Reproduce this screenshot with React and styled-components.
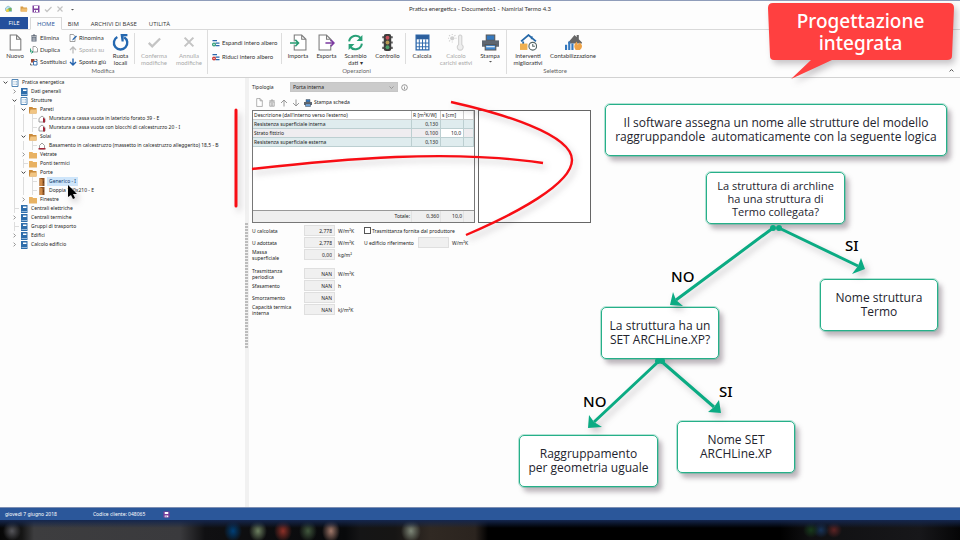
import React from 'react';
import styled, { createGlobalStyle, css } from 'styled-components';

const GlobalStyle = createGlobalStyle`
  * { box-sizing: border-box; }
  body { margin: 0; background: #fdfdfd; color: #222; font: 5px/9px "Noto Sans", sans-serif; }
  button, input, select { font: inherit; color: inherit; margin: 0; padding: 0; border: 0; background: none; }
  svg { display: block; }
`;

const Window = styled.div`
  position: relative;
  display: flex;
  flex-direction: column;
  min-height: 100vh;
  overflow: hidden;
  border-top: 1px solid #8f9dba;
`;

/* ---------- title bar and tabs ---------- */

const TitleBar = styled.header`
  display: grid;
  grid-template-columns: 1fr auto 1fr;
  align-items: center;
  height: 16px;
  padding: 0 5px;
  font: 6px/8px Lato, sans-serif;
`;
const QuickAccess = styled.div`
  display: flex;
  align-items: center;
  gap: 4px;
`;
const Title = styled.h1`
  margin: 0;
  font: inherit;
  color: #333;
`;
const QuickButton = styled.button`
  display: flex;
  width: 8px;
  justify-content: center;
  &:first-child { margin-right: 3px; }
`;
const TabBar = styled.nav`
  display: flex;
  height: 13px;
  border-bottom: 1px solid #d9d9d9;
  font: 6px/12px "Open Sans", sans-serif;
`;
const FileTab = styled.button`
  width: 28px;
  margin-right: 2px;
  background: #24509c;
  color: #fff;
`;
const Tab = styled.button`
  padding: 1px 6px 0;
  color: ${(p) => (p.$active ? '#2b579a' : '#333')};
  ${(p) => p.$active && css`
    height: 13px;
    border: 1px solid #d9d9d9;
    border-bottom-color: #fdfdfd;
    padding: 0 6px;
  `}
`;

/* ---------- ribbon ---------- */

const RibbonBar = styled.div`
  display: flex;
  height: 48px;
  border-bottom: 1px solid #d2d2d2;
  font: 6px/7px Lato, sans-serif;
`;
const RibbonGroup = styled.section`
  display: flex;
  flex-direction: column;
  border-right: ${(p) => (p.$last ? '0' : '1px solid #ddd')};
  padding: 3px ${(p) => (p.$last ? 3 : 1)}px 0 ${(p) => (p.$last ? 3 : 0)}px;
  margin-bottom: 3px;
`;
const GroupItems = styled.div`
  display: flex;
  height: 35px;
`;
const GroupName = styled.div`
  padding-top: 1px;
  text-align: center;
  color: #666;
`;
const Divider = styled.span`
  width: 1px;
  height: 31px;
  margin: 0 1px;
  background: #ddd;
`;
const LargeButton = styled.button`
  display: flex;
  flex-direction: column;
  align-items: center;
  width: ${(p) => p.$width}px;
  white-space: pre-line;
  text-align: center;
  color: ${(p) => (p.disabled ? '#a9a9a9' : '#333')};
`;
const LargeIcon = styled.span`
  display: flex;
  align-items: center;
  height: 18px;
  margin-bottom: 1px;
`;
const SmallStack = styled.div`
  display: flex;
  flex-direction: column;
  justify-content: ${(p) => (p.$spread ? 'space-evenly' : 'flex-start')};
  gap: ${(p) => (p.$spread ? 0 : 3)}px;
  width: ${(p) => p.$width}px;
  padding-left: ${(p) => (p.$spread ? 4 : 0)}px;
`;
const SmallButton = styled.button`
  display: flex;
  align-items: center;
  gap: 2px;
  height: 9px;
  white-space: nowrap;
  color: ${(p) => (p.disabled ? '#a9a9a9' : '#333')};
`;
const CollapseButton = styled.button`
  margin-left: auto;
  align-self: flex-end;
  padding: 0 6px 4px 0;
`;

/* ---------- body ---------- */

const Body = styled.main`
  display: flex;
  flex: 1;
`;
const TreePanel = styled.nav`
  flex: 0 0 245px;
  padding-left: 1px;
`;
const Splitter = styled.div`
  display: flex;
  align-items: center;
  width: 4px;
  margin-right: 3px;
  background: #f1f1f1;
  &::before {
    content: '';
    width: 3px;
    height: 126px;
    margin-bottom: 14px;
    background: radial-gradient(circle at 1px 1px, #aaa 0.6px, transparent 1px) 0 0 / 2px 3px;
  }
`;
const TreeRow = styled.div`
  display: flex;
  align-items: center;
  height: 9px;
`;
const Guide = styled.span`
  align-self: stretch;
  width: 9px;
  background: ${(p) => (p.$line ? 'linear-gradient(#ddd, #ddd) 4px 0 / 1px 100% no-repeat' : 'none')};
`;
const Toggle = styled.button`
  display: flex;
  align-items: center;
  justify-content: center;
  align-self: stretch;
  width: 9px;
`;
const LeafGuide = styled.span`
  align-self: stretch;
  width: 9px;
  background:
    linear-gradient(#ddd, #ddd) 4px 0 / 1px 100% no-repeat,
    linear-gradient(#ddd, #ddd) 4px 4px / 5px 1px no-repeat;
`;
const TreeItem = styled.button`
  display: flex;
  align-items: center;
  gap: 1px;
  height: 9px;
  padding-left: 1px;
  white-space: nowrap;
`;
const TreeText = styled.span`
  padding: 0 2px;
  background: ${(p) => (p.$selected ? '#cfe6fb' : 'transparent')};
  color: ${(p) => (p.$selected ? '#12386b' : '#222')};
`;

const Content = styled.section`
  flex: 1;
  padding-top: 4px;
`;
const TypeRow = styled.div`
  display: flex;
  align-items: center;
  height: 10px;
`;
const TypeLabel = styled.label`
  width: 38px;
`;
const TypeSelect = styled.select`
  appearance: none;
  width: 108px;
  height: 10px;
  padding-left: 2px;
  margin-right: 3px;
  border: 1px solid #c6c6c6;
  background: #cbcbcb url("data:image/svg+xml,%3Csvg xmlns='http://www.w3.org/2000/svg' width='5' height='3'%3E%3Cpath d='M.5.5l2 2 2-2' fill='none' stroke='%23999'/%3E%3C/svg%3E") right 3px center no-repeat;
`;
const LayerTools = styled.div`
  display: flex;
  align-items: center;
  gap: 4px;
  height: 13px;
  margin-top: 4px;
  padding-left: 3px;
`;
const ToolButton = styled.button`
  display: flex;
  align-items: center;
  gap: 2px;
  min-width: 8px;
  white-space: nowrap;
`;
const Layers = styled.div`
  display: flex;
  gap: 3px;
  height: 113px;
  margin-top: 1px;
`;
const LayerFrame = styled.div`
  display: flex;
  flex-direction: column;
  width: 223px;
  border: 1px solid #777;
  background: #fff;
`;
const LayerTable = styled.table`
  width: 100%;
  table-layout: fixed;
  border-spacing: 0;
  line-height: 8px;
  flex: none;
`;
const Cell = styled.td`
  height: 9px;
  padding: 0 ${(p) => (p.$num ? 2 : 1)}px;
  border: 1px solid #bccfd1;
  border-top: 0;
  border-left: 0;
  text-align: ${(p) => (p.$num ? 'right' : 'left')};
  background: ${(p) => p.$bg || 'transparent'};
`;
const HeadCell = styled.th`
  height: 9px;
  padding: 0 1px;
  border-right: 1px solid #ccc;
  border-bottom: 1px solid #ccc;
  font-weight: 400;
  text-align: left;
  white-space: nowrap;
`;
const TotalRow = styled.div`
  display: grid;
  grid-template-columns: 1fr 29px 23px 10px;
  margin-top: auto;
  border-top: 1px solid #999;
  background: #efefef;
  text-align: right;
  line-height: 11px;
  > span { padding-right: 1px; border-right: 1px solid #e2e2e2; }
`;
const Preview = styled.div`
  width: 113px;
  border: 1px solid #666;
  background: #fff;
`;
const Results = styled.div`
  display: flex;
  align-items: flex-start;
  gap: 6px;
  margin-top: 2px;
  line-height: 6px;
`;
const FieldList = styled.div`
  display: flex;
  flex-direction: column;
  gap: 1px;
`;
const Field = styled.div`
  display: flex;
  align-items: center;
  height: 11px;
  margin-top: ${(p) => (p.$gap ? 7 : 0)}px;
`;
const FieldLabel = styled.label`
  width: ${(p) => p.$width}px;
  white-space: pre-line;
`;
const FieldInput = styled.input`
  width: 31px;
  height: 11px;
  margin-right: 3px;
  padding-right: 2px;
  border: 1px solid #dfdfdf;
  background: #f0f0f0;
  text-align: right;
`;
const Unit = styled.span`
  width: 20px;
`;
const Check = styled.input`
  appearance: none;
  width: 7px;
  height: 7px;
  margin-right: 1px;
  border: 1px solid #555;
  background: #fff;
`;

/* ---------- bottom bars ---------- */

const StatusBar = styled.footer`
  display: flex;
  align-items: center;
  gap: 36px;
  height: 13px;
  padding-left: 5px;
  border-top: 1px solid #7d8fb3;
  background: #2b579a;
  color: #fff;
`;
const ClientCode = styled.span`
  display: flex;
  align-items: center;
  gap: 18px;
`;
const Taskbar = styled.div`
  height: 20px;
  background:
    linear-gradient(#14264d 0, #14264d00 8px),
    radial-gradient(ellipse 9px 10px at 12px 11px, #55555a, #55555a00),
    radial-gradient(ellipse 9px 11px at 233px 11px, #003f77, #003f7700),
    radial-gradient(ellipse 9px 11px at 258px 11px, #6d8060, #6d806000),
    radial-gradient(ellipse 9px 11px at 283px 11px, #8c3028, #8c302800),
    radial-gradient(ellipse 9px 11px at 308px 11px, #41573d, #41573d00),
    radial-gradient(ellipse 9px 12px at 331px 11px, #a0786a, #a0786a00),
    radial-gradient(ellipse 10px 12px at 411px 11px, #7e8778, #7e877800),
    radial-gradient(ellipse 8px 8px at 811px 10px, #173a1b, #173a1b00),
    radial-gradient(ellipse 8px 8px at 821px 10px, #173359, #17335900),
    radial-gradient(ellipse 8px 8px at 834px 10px, #5b2324, #5b232400),
    linear-gradient(90deg, #060606 0, #151515 22px, #3d3d3f 34px, #3a3a3d 180px, #101012 205px,
      #08090b 345px, #151516 360px, #161514 395px, #302923 430px, #2b241f 475px, #000 488px, #000 780px, #101012 810px, #17171a 920px, #050506 960px);
`;

/* ---------- annotation layer ---------- */

const Annotations = styled.div`
  position: absolute;
  inset: -1px 0 0 0;
  pointer-events: none;
`;
const Drawing = styled.svg`
  position: absolute;
  left: 0;
  top: 0;
  filter: drop-shadow(3px 4px 3px rgba(60, 50, 60, 0.28));
`;
const Note = styled.div`
  position: absolute;
  left: ${(p) => p.$x}px;
  top: ${(p) => p.$y}px;
  display: flex;
  align-items: center;
  justify-content: center;
  width: ${(p) => p.$w}px;
  height: 52px;
  border: 1px solid #26b089;
  outline: 1px solid #26b08955;
  border-radius: 5px;
  background: #fff;
  box-shadow: 4px 5px 5px rgba(70, 50, 65, 0.35);
  color: #23242e;
  font: 500 ${(p) => (p.$tight ? '11px/13px' : '12px/14px')} "Open Sans", sans-serif;
  text-align: center;
  white-space: pre;
`;
const Answer = styled.span`
  position: absolute;
  left: ${(p) => p.$x}px;
  top: ${(p) => p.$y}px;
  color: #000;
  font: 500 15px/16px "Noto Sans", sans-serif;
`;
const CalloutText = styled.div`
  position: absolute;
  left: 768px;
  top: 4px;
  width: 185px;
  padding-top: 6px;
  color: #fff;
  font: 500 19px/22px "Noto Sans", sans-serif;
  text-align: center;
  white-space: pre-line;
`;

/* ---------- icons ---------- */

const G = '#7b7b7b';
const paths = {
  app: <><path d="M1 11V6l5-4 7 4v7H3z" fill="#bfe0ee" stroke="#5aa0b5" /><path d="M3 12q5-10 10-5v5z" fill="#77b255" /><circle cx="5" cy="11" r="3" fill="#f3cf3e" /></>,
  folder: <><path d="M1 3h5l1 2h7v8H1z" fill="#d79b45" /><path d="M3 7h12l-1 6H2z" fill="#f0bd6f" /></>,
  save: <><path d="M1 1h14v14H1z" fill="#7d3e9c" /><path d="M4 2h8v5H4zM4 10h8v4H4z" fill="#fff" /><path d="M6 11h2v3H6z" fill="#7d3e9c" /></>,
  page: <path d="M3 1h6l4 4v10H3zM9 1v4h4" fill="#fff" stroke={G} />,
  pageIn: <><path d="M4 1h7l4 4v10H4zM11 1v4h4" fill="#fff" stroke={G} /><path d="M3 7h6v3H3z" fill="#fff" /><path d="M0 8.500h8M5 5.500l3 3-3 3" fill="none" stroke="#279b72" strokeWidth="1.500" /></>,
  pageOut: <><path d="M1 1h7l4 4v10H1zM8 1v4h4" fill="#fff" stroke={G} /><path d="M10 7h4v3h-4z" fill="#fff" /><path d="M7 8.500h8M12 5.500l3 3-3 3" fill="none" stroke="#7b3aa0" strokeWidth="1.500" /></>,
  trash: <><path d="M2 4h12M6 4V2h4v2" fill="none" stroke="#4a5565" strokeWidth="1.800" /><path d="M3 6h10v9H3z" fill="#5a6677" /><path d="M6 7v7M8 7v7M10 7v7" stroke="#fff" /></>,
  bin: <><path d="M2 4h12M6 4V2h4v2" fill="none" stroke="#999" strokeWidth="1.500" /><path d="M3.500 6h9v8.500h-9zM6.500 7v7M9.500 7v7" fill="none" stroke="#999" strokeWidth="1.500" /></>,
  copy: <><path d="M6 1h5l4 4v7H6z" fill="#fff" stroke={G} strokeWidth="1.400" /><path d="M1 5v7h4M3 9l3 3-3 3" fill="none" stroke="#279b72" strokeWidth="1.800" /></>,
  swap: <><path d="M2 2h7v7H2z" fill="#9c4a3a" /><path d="M7 7h7v7H7z" fill="#fff" stroke="#2b67ab" strokeWidth="1.800" /><path d="M1 11v3h4M11 3h3v3" stroke="#444" fill="none" strokeWidth="1.500" /></>,
  rename: <><path d="M2 1h7l3 4v10H2z" fill="#fff" stroke={G} strokeWidth="1.400" /><path d="M6 13l2-4 6-6 2 2-6 6z" fill="#2b67ab" /></>,
  up: <path d="M8 15V3M2 8l6-6 6 6" fill="none" stroke="#bbb" strokeWidth="2.500" />,
  grayUp: <path d="M8 15V2M2 8l6-6 6 6" fill="none" stroke="#8d8d8d" strokeWidth="1.800" />,
  down: <path d="M8 1v12M2 8l6 6 6-6" fill="none" stroke="#2463ad" strokeWidth="2.800" />,
  grayDown: <path d="M8 1v13M2 8l6 6 6-6" fill="none" stroke="#8d8d8d" strokeWidth="1.800" />,
  rotate: <><path d="M5 2.800A6.300 6.300 0 1 0 11.500 3" fill="none" stroke="#2568b0" strokeWidth="2.200" /><path d="M8 0h6.500v2H11v5H9z" fill="#2568b0" /></>,
  check: <path d="M2 9l4 4 9-9" fill="none" stroke="#c4c4c4" strokeWidth="2.600" />,
  cross: <path d="M3 3l10 10M13 3L3 13" stroke="#c4c4c4" strokeWidth="2.400" />,
  expand: <><path d="M1 3h9M7 8h8M7 13h8" stroke="#2b67ab" strokeWidth="2.500" /><circle cx="4" cy="11" r="4" fill="#279b72" /><path d="M4 9v4M2 11h4" stroke="#fff" /></>,
  collapse: <><path d="M1 3h9M7 8h8M7 13h8" stroke="#2b67ab" strokeWidth="2.500" /><circle cx="4" cy="11" r="4" fill="#d13a35" /><path d="M2 11h4" stroke="#fff" /></>,
  sync: <><path d="M2 7a6.200 6.200 0 0 1 11-3M14 9a6.200 6.200 0 0 1-11 3" fill="none" stroke="#28a077" strokeWidth="1.900" /><path d="M14.500 1v5.500H9zM1.500 15V9.500H7z" fill="#28a077" /></>,
  traffic: <><path d="M3 3h10M3 8h10M3 13h10" stroke="#666" strokeWidth="2" /><rect x="4.500" y="0" width="7" height="16" rx="2" fill="#3d3d3d" /><circle cx="8" cy="3.500" r="1.800" fill="#c7505a" /><circle cx="8" cy="8" r="1.800" fill="#b89a55" /><circle cx="8" cy="12.500" r="1.800" fill="#4ca06a" /></>,
  calc: <><path d="M2 1h12v14H2z" fill="#fff" stroke="#2b67ab" strokeWidth="1.200" /><path d="M2 1h12v4H2z" fill="#2b5f9e" /><path d="M5 5v10M8 5v10M11 5v10M2 8.500h12M2 12h12" stroke="#2b67ab" strokeWidth=".9" /></>,
  thermo: <><circle cx="4" cy="4" r="2" fill="#d0d0d0" /><path d="M4 0v1M4 7v1M0 4h1M7 4h1M1 1l1 1M1 7l1-1M7 1L6 2" stroke="#d0d0d0" /><path d="M10 2q1.500-2 3 0v8a2.800 2.800 0 1 1-3 0z" fill="#eee" stroke="#cfcfcf" /></>,
  printer: <><path d="M4 1h8v5H4z" fill="#3478be" stroke="#555" /><path d="M0 6h16v6H0z" fill="#5e6670" /><path d="M3 10h10v5H3z" fill="#3f87cf" stroke="#555" /><path d="M4 12h8" stroke="#fff" /></>,
  houseClock: <><path d="M1 7l7-6 7 6M3 7v3M11 2v3" fill="none" stroke="#2568a8" strokeWidth="1.700" /><path d="M0 9h7v6H0z" fill="#efb050" /><circle cx="12" cy="11.500" r="3.600" fill="#fff" stroke="#566" strokeWidth="1.100" /><path d="M12 9.500v2h2" fill="none" stroke="#566" /></>,
  houseFlame: <><path d="M3 8l6-7 7 7v1H3zM11 1h2v4h-2z" fill="#666" /><path d="M0 10h2v5H0zM3 7h2v8H3zM6 9h2v6H6z" fill="#3478be" /><path d="M10 15q-3-4 1-8l1 3 2-2q4 4 0 7z" fill="#eea347" /></>,
  doc: <><path d="M2 1h12v14H2z" fill="#fff" stroke="#3f78ae" strokeWidth="1.800" /><path d="M5 5h2M9 5h3M5 8h2M9 8h3M5 11h2M9 11h3" stroke="#6d9ac4" strokeWidth="1.300" /></>,
  book: <><path d="M2 0h13v16H2z" fill="#2e6dab" /><path d="M6 3h7v3H6z" fill="#fff" /><path d="M3 13h11" stroke="#b5d0e8" strokeWidth="1.500" /></>,
  closed: <path d="M0 2h7l1 2h8v11H0z" fill="#e8b263" />,
  open: <><path d="M0 2h7l1 2h7v11H0z" fill="#c98a3b" /><path d="M3 7h13l-1 8H1z" fill="#f1c583" /></>,
  wall: <><path d="M2 14V7l6-5 6 5v7z" fill="#fff" stroke="#777" strokeWidth="1.400" /><path d="M10 5l4 3v7h-4z" fill="#a32638" /></>,
  slab: <><path d="M3 14V7l5-5 5 5v7z" fill="#fff" stroke="#777" strokeWidth="1.400" /><path d="M1 12h14v3H1z" fill="#a32638" /></>,
  door: <><path d="M3 0h10v16H3z" fill="#8a5226" /><path d="M3 0l6 3v13H3z" fill="#d08b48" /><circle cx="11" cy="8" r="1" fill="#402409" /></>,
  info: <><circle cx="8" cy="8" r="6.500" fill="none" stroke="#666" strokeWidth="1.500" /><path d="M8 7v5M8 4v1.500" stroke="#666" strokeWidth="1.500" /></>,
  right: <path d="M5 2l6 6-6 6" fill="none" stroke="#777" strokeWidth="2.600" />,
  chevDown: <path d="M2 5l6 6 6-6" fill="none" stroke="#333" strokeWidth="3" />,
  chevUp: <path d="M2 11l6-6 6 6" fill="none" stroke="#444" strokeWidth="3" />,
  caret: <path d="M3 6h10l-5 5z" fill="#555" />,
};
const Icon = ({ name, size = 8 }) => (
  <svg width={size} height={size} viewBox="0 0 16 16" aria-hidden="true">{paths[name]}</svg>
);

const Large = ({ icon, width, size = 17, caret, children, ...rest }) => (
  <LargeButton $width={width} {...rest}>
    <LargeIcon><Icon name={icon} size={size} /></LargeIcon>
    {children}
    {caret && <Icon name="caret" size={5} />}
  </LargeButton>
);
const Small = ({ icon, children, ...rest }) => (
  <SmallButton {...rest}><Icon name={icon} size={8} />{children}</SmallButton>
);

const tree = [
  [0, 'Pratica energetica', 'doc', 'open'],
  [1, 'Dati generali', 'book', 'shut'],
  [1, 'Strutture', 'doc', 'open'],
  [2, 'Pareti', 'open', 'open'],
  [3, 'Muratura a cassa vuota in laterizio forato 39 - E', 'wall'],
  [3, 'Muratura a cassa vuota con blocchi di calcestruzzo 20 - I', 'wall'],
  [2, 'Solai', 'open', 'open'],
  [3, 'Basamento in calcestruzzo (massetto in calcestruzzo alleggerito) 18,5 - B', 'slab'],
  [2, 'Vetrate', 'closed', 'shut'],
  [2, 'Ponti termici', 'closed'],
  [2, 'Porte', 'open', 'open'],
  [3, 'Generico - I', 'door', null, true],
  [3, 'Doppia 160x210 - E', 'door'],
  [2, 'Finestre', 'closed', 'shut'],
  [1, 'Centrali elettriche', 'book'],
  [1, 'Centrali termiche', 'book', 'shut'],
  [1, 'Gruppi di trasporto', 'book'],
  [1, 'Edifici', 'book', 'shut'],
  [1, 'Calcolo edificio', 'book', 'shut'],
];

const layers = [
  ['Resistenza superficiale interna', '0,130', '', '#dfecee', '#dfecee'],
  ['Strato fittizio', '0,100', '10,0', '#efedf0', '#fff'],
  ['Resistenza superficiale esterna', '0,130', '', '#dfecee', '#dfecee'],
];

const results = [
  ['ucalc', 'U calcolata', '2,778', 'W/m²K'],
  ['uadot', 'U adottata', '2,778', 'W/m²K'],
  ['massa', 'Massa\nsuperficiale', '0,00', 'kg/m²'],
  ['trasm', 'Trasmittanza\nperiodica', 'NAN', 'W/m²K', true],
  ['sfas', 'Sfasamento', 'NAN', 'h'],
  ['smor', 'Smorzamento', 'NAN', ''],
  ['capa', 'Capacità termica\ninterna', 'NAN', 'kJ/m²K'],
];

export default function App() {
  return (
    <>
      <GlobalStyle />
      <Window>
        <TitleBar>
          <QuickAccess>
            {['app', 'folder', 'save', 'check', 'cross', 'caret'].map((n) => (
              <QuickButton key={n} aria-label={n}><Icon name={n} size={n === 'caret' ? 5 : 8} /></QuickButton>
            ))}
          </QuickAccess>
          <Title>Pratica energetica - Documento1 - Namirial Termo 4.3</Title>
        </TitleBar>
        <TabBar>
          <FileTab>FILE</FileTab>
          <Tab $active>HOME</Tab>
          <Tab>BIM</Tab>
          <Tab>ARCHIVI DI BASE</Tab>
          <Tab>UTILITÀ</Tab>
        </TabBar>

        <RibbonBar>
          <RibbonGroup>
            <GroupItems>
              <Large icon="page" width={30}>Nuovo</Large>
              <SmallStack $width={39}>
                <Small icon="trash">Elimina</Small>
                <Small icon="copy">Duplica</Small>
                <Small icon="swap">Sostituisci</Small>
              </SmallStack>
              <SmallStack $width={39}>
                <Small icon="rename">Rinomina</Small>
                <Small icon="up" disabled>Sposta su</Small>
                <Small icon="down">Sposta giù</Small>
              </SmallStack>
              <Large icon="rotate" width={25}>{'Ruota\nlocali'}</Large>
              <Divider />
              <Large icon="check" width={36} size={14} disabled>{'Conferma\nmodifiche'}</Large>
              <Large icon="cross" width={34} size={14} disabled>{'Annulla\nmodifiche'}</Large>
            </GroupItems>
            <GroupName>Modifica</GroupName>
          </RibbonGroup>
          <RibbonGroup>
            <GroupItems>
              <SmallStack $width={72} $spread>
                <Small icon="expand">Espandi intero albero</Small>
                <Small icon="collapse">Riduci intero albero</Small>
              </SmallStack>
              <Divider />
              <Large icon="pageIn" width={30}>Importa</Large>
              <Large icon="pageOut" width={27}>Esporta</Large>
              <Large icon="sync" width={31}>{'Scambio\ndati ▾'}</Large>
              <Large icon="traffic" width={33}>Controllo</Large>
              <Divider />
              <Large icon="calc" width={30}>Calcola</Large>
              <Large icon="thermo" width={38} disabled>{'Calcolo\ncarichi estivi'}</Large>
              <Large icon="printer" width={30} caret>Stampa</Large>
            </GroupItems>
            <GroupName>Operazioni</GroupName>
          </RibbonGroup>
          <RibbonGroup $last>
            <GroupItems>
              <Large icon="houseClock" width={36}>{'Interventi\nmigliorativi'}</Large>
              <Large icon="houseFlame" width={54}>Contabilizzazione</Large>
            </GroupItems>
            <GroupName>Selettore</GroupName>
          </RibbonGroup>
          <CollapseButton aria-label="Comprimi"><Icon name="chevUp" size={5} /></CollapseButton>
        </RibbonBar>

        <Body>
          <TreePanel>
            {tree.map(([depth, text, icon, state, selected]) => (
              <TreeRow key={text}>
                {Array.from({ length: depth }, (_, i) => <Guide key={i} $line={i > 0} />)}
                {state ? (
                  <Toggle aria-label={text}><Icon name={state === 'open' ? 'chevDown' : 'right'} size={5} /></Toggle>
                ) : <LeafGuide />}
                <TreeItem>
                  <Icon name={icon} size={8} />
                  <TreeText $selected={selected}>{text}</TreeText>
                </TreeItem>
              </TreeRow>
            ))}
          </TreePanel>
          <Splitter />
          <Content>
            <TypeRow>
              <TypeLabel htmlFor="tipologia">Tipologia</TypeLabel>
              <TypeSelect id="tipologia"><option>Porta interna</option></TypeSelect>
              <Icon name="info" size={7} />
            </TypeRow>
            <LayerTools>
              <ToolButton aria-label="Nuovo strato"><Icon name="page" size={9} /></ToolButton>
              <ToolButton aria-label="Elimina strato"><Icon name="bin" size={8} /></ToolButton>
              <ToolButton aria-label="Su"><Icon name="grayUp" size={8} /></ToolButton>
              <ToolButton aria-label="Giù"><Icon name="grayDown" size={8} /></ToolButton>
              <ToolButton><Icon name="printer" size={8} />Stampa scheda</ToolButton>
            </LayerTools>
            <Layers>
              <LayerFrame>
                <LayerTable>
                  <colgroup>
                    <col /><col width="29" /><col width="23" /><col width="10" />
                  </colgroup>
                  <thead>
                    <tr>
                      <HeadCell>Descrizione (dall'interno verso l'esterno)</HeadCell>
                      <HeadCell>R [m²K/W]</HeadCell>
                      <HeadCell>s [cm]</HeadCell>
                      <HeadCell />
                    </tr>
                  </thead>
                  <tbody>
                    {layers.map(([name, r, s, bg, sBg]) => (
                      <tr key={name}>
                        <Cell $bg={bg}>{name}</Cell>
                        <Cell $num $bg={bg}>{r}</Cell>
                        <Cell $num $bg={sBg}>{s}</Cell>
                        <Cell $bg={bg} />
                      </tr>
                    ))}
                  </tbody>
                </LayerTable>
                <TotalRow><span>Totale:</span><span>0,360</span><span>10,0</span></TotalRow>
              </LayerFrame>
              <Preview />
            </Layers>
            <Results>
              <FieldList>
                {results.map(([id, label, value, unit, gap]) => (
                  <Field key={id} $gap={gap}>
                    <FieldLabel htmlFor={id} $width={52}>{label}</FieldLabel>
                    <FieldInput id={id} defaultValue={value} readOnly />
                    <Unit>{unit}</Unit>
                  </Field>
                ))}
              </FieldList>
              <FieldList>
                <Field>
                  <Check type="checkbox" id="fornita" />
                  <label htmlFor="fornita">Trasmittanza fornita dal produttore</label>
                </Field>
                <Field>
                  <FieldLabel htmlFor="urif" $width={54}>U edificio riferimento</FieldLabel>
                  <FieldInput id="urif" readOnly />
                  <Unit>W/m²K</Unit>
                </Field>
              </FieldList>
            </Results>
          </Content>
        </Body>

        <StatusBar>
          <span>giovedì 7 giugno 2018</span>
          <ClientCode>
            Codice cliente: 048065
            <Icon name="save" size={7} />
          </ClientCode>
        </StatusBar>
        <Taskbar />

        <Annotations>
          <Drawing width="960" height="500" viewBox="0 0 960 500">
            <g fill="none" stroke="#f80d14">
              <path d="M236 110V206" strokeWidth="3" strokeLinecap="round" />
              <path d="M252 169C340 159 450 149 543 163" strokeWidth="2.400" />
              <path d="M451 102C500 113 572 134 572 160C572 184 515 214 466 235" strokeWidth="2.400" />
            </g>
            <path d="M773 3H949Q954 3 954 8L952 56Q952 60 947 60H832L791 79L811 60H774Q770 60 770 56L768 8Q768 3 773 3Z" fill="#ff4040" />
          </Drawing>
          <CalloutText>{'Progettazione\nintegrata'}</CalloutText>

          <Note $x={605} $y={104} $w={342}>{'Il software assegna un nome alle strutture del modello\nraggruppandole  automaticamente con la seguente logica'}</Note>
          <Note $x={706} $y={172} $w={139} $tight>{'La struttura di archline\nha una struttura di\nTermo collegata?'}</Note>
          <Note $x={820} $y={279} $w={118}>{'Nome struttura\nTermo'}</Note>
          <Note $x={601} $y={307} $w={118}>{'La struttura ha un\nSET ARCHLine.XP?'}</Note>
          <Note $x={519} $y={435} $w={139}>{'Raggruppamento\nper geometria uguale'}</Note>
          <Note $x={677} $y={421} $w={118}>{'Nome SET\nARCHLine.XP'}</Note>

          <Drawing width="960" height="500" viewBox="0 0 960 500">
            <g stroke="#0bab83" strokeWidth="3" fill="#0bab83">
              <path d="M773 228L676 300M779 228L858 266M659 361L594 422M661 361L714 407" />
              <g stroke="none">
                <circle cx="773" cy="228" r="3" /><circle cx="779" cy="228" r="3" />
                <circle cx="658" cy="361" r="3" /><circle cx="662" cy="361" r="3" />
                <path d="M670 305L673 292L676 300L683 306Z" />
                <path d="M865 269L861 258L858 266L852 274Z" />
                <path d="M588 428L589 415L594 422L602 427Z" />
                <path d="M721 413L719 400L714 407L708 412Z" />
              </g>
            </g>
          </Drawing>
          <Answer $x={671} $y={268}>NO</Answer>
          <Answer $x={845} $y={237}>SI</Answer>
          <Answer $x={583} $y={393}>NO</Answer>
          <Answer $x={719} $y={383}>SI</Answer>

          <Drawing width="90" height="210" viewBox="0 0 90 210">
            <path d="M68 185V197L71 195L73 199L75 198L73 194H77Z" fill="#000" />
          </Drawing>
        </Annotations>
      </Window>
    </>
  );
}
